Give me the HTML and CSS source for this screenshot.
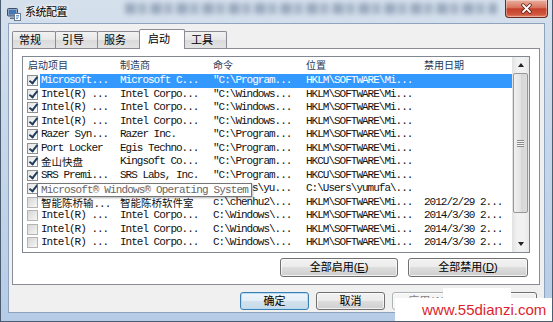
FILE: index.html
```html
<!DOCTYPE html>
<html lang="zh-CN">
<head>
  <meta charset="utf-8">
  <title>系统配置</title>
  <link rel="stylesheet" href="styles.css">
</head>
<body>
  <div class="window">
    <div class="titlebar">
      <svg class="appicon" width="14" height="14" viewBox="0 0 14 14">
        <rect x="0.5" y="1.5" width="10" height="7.5" rx="1" fill="#8ea6c4" stroke="#3d4f66"/>
        <rect x="2" y="3" width="7" height="4.5" fill="#3f78b8"/>
        <path d="M3 10.5h5v1.5h-5z" fill="#5d6f86"/>
        <rect x="7.5" y="6.5" width="6" height="7" fill="#fff" stroke="#6a7a8e"/>
        <path d="M9 8.5h3M9 10h3M9 11.5h2" stroke="#4a86c5" stroke-width="0.8"/>
      </svg>
      <span class="title">系统配置</span>
      <div class="glass"></div>
      <div class="close">
        <svg width="13" height="11" viewBox="0 0 13 11">
          <path d="M3 2l7 7M10 2l-7 7" stroke="#5b1d14" stroke-width="3.4" stroke-linecap="round"/>
          <path d="M3 2l7 7M10 2l-7 7" stroke="#fff" stroke-width="1.8" stroke-linecap="round"/>
        </svg>
      </div>
    </div>

    <div class="dialog">
      <div class="tabs">
        <div class="tab t1">常规</div>
        <div class="tab">引导</div>
        <div class="tab">服务</div>
        <div class="tab active">启动</div>
        <div class="tab">工具</div>
      </div>

      <div class="panel">
        <div class="listview">
          <div class="lv-body">
            <div class="lv-head">
              <div class="h1">启动项目</div>
              <div>制造商</div>
              <div>命令</div>
              <div>位置</div>
              <div>禁用日期</div>
            </div>

            <div class="row sel">
              <div class="cbcell"><span class="cb on"></span></div>
              <div class="cells"><span>Microsoft...</span><span>Microsoft C...</span><span>"C:\Program...</span><span>HKLM\SOFTWARE\Mi...</span><span></span></div>
            </div>
            <div class="row">
              <div class="cbcell"><span class="cb on"></span></div>
              <div class="cells"><span>Intel(R) ...</span><span>Intel Corpo...</span><span>"C:\Windows...</span><span>HKLM\SOFTWARE\Mi...</span><span></span></div>
            </div>
            <div class="row">
              <div class="cbcell"><span class="cb on"></span></div>
              <div class="cells"><span>Intel(R) ...</span><span>Intel Corpo...</span><span>"C:\Windows...</span><span>HKLM\SOFTWARE\Mi...</span><span></span></div>
            </div>
            <div class="row">
              <div class="cbcell"><span class="cb on"></span></div>
              <div class="cells"><span>Intel(R) ...</span><span>Intel Corpo...</span><span>"C:\Windows...</span><span>HKLM\SOFTWARE\Mi...</span><span></span></div>
            </div>
            <div class="row">
              <div class="cbcell"><span class="cb on"></span></div>
              <div class="cells"><span>Razer Syn...</span><span>Razer Inc.</span><span>"C:\Program...</span><span>HKLM\SOFTWARE\Mi...</span><span></span></div>
            </div>
            <div class="row">
              <div class="cbcell"><span class="cb on"></span></div>
              <div class="cells"><span>Port Locker</span><span>Egis Techno...</span><span>"C:\Program...</span><span>HKLM\SOFTWARE\Mi...</span><span></span></div>
            </div>
            <div class="row">
              <div class="cbcell"><span class="cb on"></span></div>
              <div class="cells"><span><i class="cjk">金山快盘</i></span><span>Kingsoft Co...</span><span>"C:\Program...</span><span>HKCU\SOFTWARE\Mi...</span><span></span></div>
            </div>
            <div class="row">
              <div class="cbcell"><span class="cb on"></span></div>
              <div class="cells"><span>SRS Premi...</span><span>SRS Labs, Inc.</span><span>"C:\Program...</span><span>HKCU\SOFTWARE\Mi...</span><span></span></div>
            </div>
            <div class="row">
              <div class="cbcell"><span class="cb on"></span></div>
              <div class="cells"><span></span><span></span><span class="under-tip">s\yu...</span><span>C:\Users\yumufa\...</span><span></span></div>
            </div>
            <div class="row">
              <div class="cbcell"><span class="cb"></span></div>
              <div class="cells"><span><i class="cjk">智能陈桥输</i>...</span><span><i class="cjk">智能陈桥软件室</i></span><span>c:\chenhu2\...</span><span>HKLM\SOFTWARE\Mi...</span><span>2012/2/29 2...</span></div>
            </div>
            <div class="row">
              <div class="cbcell"><span class="cb"></span></div>
              <div class="cells"><span>Intel(R) ...</span><span>Intel Corpo...</span><span>C:\Windows\...</span><span>HKLM\SOFTWARE\Mi...</span><span>2014/3/30 2...</span></div>
            </div>
            <div class="row">
              <div class="cbcell"><span class="cb"></span></div>
              <div class="cells"><span>Intel(R) ...</span><span>Intel Corpo...</span><span>C:\Windows\...</span><span>HKLM\SOFTWARE\Mi...</span><span>2014/3/30 2...</span></div>
            </div>
            <div class="row">
              <div class="cbcell"><span class="cb"></span></div>
              <div class="cells"><span>Intel(R) ...</span><span>Intel Corpo...</span><span>C:\Windows\...</span><span>HKLM\SOFTWARE\Mi...</span><span>2014/3/30 2...</span></div>
            </div>
          </div>

          <div class="vscroll">
            <div class="sb-btn"><span class="arrow up"></span></div>
            <div class="sb-track">
              <div class="sb-thumb"><span class="grip"></span></div>
            </div>
            <div class="sb-btn"><span class="arrow down"></span></div>
          </div>
        </div>

        <div class="panel-btns">
          <button class="btn all-on">全部启用(<u>E</u>)</button>
          <button class="btn all-off">全部禁用(<u>D</u>)</button>
        </div>
      </div>

      <div class="footer">
        <button class="btn default">确定</button>
        <button class="btn">取消</button>
        <button class="btn disabled">应用(<u>A</u>)</button>
        <button class="btn">帮助</button>
      </div>
    </div>

    <div class="tooltip">Microsoft® Windows® Operating System</div>
    <div class="watermark">www.55dianzi.com</div>
  </div>
</body>
</html>
```

FILE: styles.css
```css
html {
  font-family: "Liberation Sans", "Noto Sans CJK SC", sans-serif;
}
body {
  margin: 0;
  background: #fff;
}
.window {
  position: relative;
  width: 553px;
  height: 322px;
  box-sizing: border-box;
  display: flex;
  flex-direction: column;
  padding-bottom: 8px;
  overflow: hidden;
  background: linear-gradient(#d5e0ec, #c8d8ea 40%, #b6cce6);
  border: 1px solid #4c5d72;
  border-top: none;
}

/* title bar */
.titlebar {
  height: 23px;
  display: flex;
  align-items: flex-start;
  padding-left: 6px;
}
.appicon {
  margin-top: 7px;
}
.title {
  margin-left: 4px;
  margin-top: 5px;
  font-size: 11px;
  line-height: 15px;
  letter-spacing: -0.5px;
  color: #000;
  text-shadow: 0 0 5px #fff, 0 0 3px #fff;
}
.glass {
  margin-left: 58px;
  margin-top: 3px;
  width: 372px;
  height: 11px;
  background: repeating-linear-gradient(90deg, rgba(70,92,125,.5) 0 10px, rgba(90,110,140,.2) 10px 14px, rgba(70,92,125,.4) 14px 21px, rgba(120,140,165,.15) 21px 26px);
  filter: blur(2.5px);
  opacity: .8;
}
.close {
  margin-left: auto;
  margin-right: 4px;
  width: 43px;
  height: 18px;
  box-sizing: border-box;
  display: flex;
  align-items: center;
  justify-content: center;
  border: 1px solid #6a2a22;
  border-top: none;
  border-radius: 0 0 4px 4px;
  background: linear-gradient(#eab0a1, #d9735e 45%, #c5402a 52%, #d0573f 85%, #e08a6c);
  box-shadow: inset 0 0 0 1px rgba(255,255,255,.35);
}

/* dialog body */
.dialog {
  margin: 0 7px;
  height: 290px;
  box-sizing: border-box;
  background: #f0f0f0;
  border: 1px solid #8ea3bd;
  padding: 5px 4px 0 3px;
}
.tabs {
  display: flex;
  align-items: flex-start;
  height: 20px;
  position: relative;
  z-index: 2;
}
.tab {
  margin-top: 2px;
  margin-left: -1px;
  width: 43px;
  height: 17px;
  box-sizing: border-box;
  padding-left: 6px;
  border: 1px solid #898c95;
  border-bottom: none;
  border-radius: 2px 2px 0 0;
  background: linear-gradient(#f2f2f2, #e6e6e6 50%, #dadada 50%, #e3e3e3);
  font-size: 11px;
  line-height: 16px;
  color: #000;
}
.tab.t1 {
  margin-left: 0;
  width: 44px;
}
.tab.active {
  margin-top: 0;
  width: 46px;
  height: 20px;
  padding-left: 8px;
  background: #fff;
  line-height: 18px;
}

.panel {
  position: relative;
  z-index: 1;
  margin-top: -1px;
  width: 528px;
  height: 237px;
  box-sizing: border-box;
  background: #fff;
  border: 1px solid #898c95;
  padding: 7px 11px 0 9px;
}

/* list view */
.listview {
  display: flex;
  width: 508px;
  height: 197px;
  box-sizing: border-box;
  border: 1px solid #828790;
  background: #fff;
}
.lv-body {
  flex: 1;
  overflow: hidden;
}
.lv-head {
  display: grid;
  grid-template-columns: 95px 93px 93px 118px 1fr;
  height: 17px;
  font-size: 10px;
  line-height: 17px;
  color: #1e395b;
}
.lv-head div {
  padding-left: 2px;
}
.lv-head .h1 {
  padding-left: 5px;
}
.row {
  display: flex;
  height: 13.5px;
}
.cbcell {
  width: 17px;
  box-sizing: border-box;
  padding-left: 4px;
  display: flex;
  align-items: center;
}
.cb {
  position: relative;
  width: 11px;
  height: 11px;
  box-sizing: border-box;
  border: 1px solid #b4b4b4;
  background: linear-gradient(135deg, #d6d6d6, #f6f6f6);
}
.cb.on {
  border-color: #8f8f8f;
  background: linear-gradient(135deg, #e4e4e4, #fdfdfd);
}
.cb.on::after {
  content: "";
  position: absolute;
  left: 3px;
  top: -1px;
  width: 3px;
  height: 7px;
  border: solid #1f3d5c;
  border-width: 0 2px 2px 0;
  transform: rotate(38deg);
}
.cells {
  flex: 1;
  display: grid;
  grid-template-columns: 78px 93px 93px 118px 1fr;
  font-family: "Liberation Mono", "Noto Sans CJK SC", monospace;
  font-size: 11px;
  letter-spacing: -1px;
  line-height: 13.5px;
  color: #111;
  white-space: nowrap;
}
.cells span {
  overflow: hidden;
  padding-left: 2px;
}
.cells span:first-child {
  padding-left: 1px;
}
.cells span.under-tip {
  padding-left: 41px;
}
.cjk {
  font-style: normal;
  font-family: "Noto Sans CJK SC", sans-serif;
  font-size: 10.5px;
  letter-spacing: 0;
}
.row.sel .cells {
  background: #3399ff;
  color: #fff;
}

/* scrollbar */
.vscroll {
  width: 17px;
  display: flex;
  flex-direction: column;
  background: linear-gradient(90deg, #e2e2e2, #f1f1f1 30%, #f1f1f1 70%, #e8e8e8);
}
.sb-btn {
  height: 16px;
  display: flex;
  align-items: center;
  justify-content: center;
}
.arrow {
  width: 0;
  height: 0;
  border-left: 3.5px solid transparent;
  border-right: 3.5px solid transparent;
}
.arrow.up {
  border-bottom: 4px solid #222;
}
.arrow.down {
  border-top: 4px solid #222;
}
.sb-track {
  flex: 1;
}
.sb-thumb {
  margin: 0 1px;
  height: 140px;
  box-sizing: border-box;
  border: 1px solid #979797;
  border-radius: 2px;
  background: linear-gradient(90deg, #f0f0f0, #e3e3e3 50%, #d6d6d6 51%, #dcdcdc);
  display: flex;
  align-items: center;
  justify-content: center;
}
.grip {
  width: 7px;
  height: 7px;
  background: repeating-linear-gradient(#8a8a8a 0 1px, #f4f4f4 1px 2px);
}

/* buttons */
.btn {
  height: 18px;
  padding: 0;
  box-sizing: border-box;
  border: 1px solid #707070;
  border-radius: 3px;
  background: linear-gradient(#f2f2f2, #ebebeb 50%, #dddddd 50%, #cfcfcf);
  box-shadow: inset 0 0 0 1px rgba(255,255,255,.7);
  font-family: "Liberation Sans", "Noto Sans CJK SC", sans-serif;
  font-size: 11px;
  line-height: 15px;
  color: #000;
}
.panel-btns {
  margin-top: 5px;
  display: flex;
  justify-content: flex-end;
  gap: 10px;
}
.all-on {
  width: 118px;
  height: 19px;
}
.all-off {
  width: 120px;
  height: 19px;
}
.footer {
  margin-top: 7px;
  margin-right: 3px;
  display: flex;
  justify-content: flex-end;
  gap: 7px;
}
.footer .btn {
  width: 69px;
}
.btn.default {
  border-color: #3c7fb1;
  background: linear-gradient(#eef6fb, #e3eef6 50%, #d2e2ee 50%, #c8dae8);
  box-shadow: inset 0 0 0 1px #b6dcf3;
}
.btn.disabled {
  border-color: #adb2b5;
  background: #f4f4f4;
  color: #838383;
}

/* overlays */
.tooltip {
  position: absolute;
  z-index: 5;
  left: 36px;
  top: 183px;
  width: 215px;
  height: 14px;
  box-sizing: border-box;
  padding-left: 3px;
  border: 1px solid #767676;
  background: #fff;
  box-shadow: 1px 1px 2px rgba(0,0,0,.3);
  font-family: "Liberation Mono", monospace;
  font-size: 11px;
  letter-spacing: -0.85px;
  line-height: 12px;
  color: #666;
  white-space: nowrap;
}
.watermark {
  position: absolute;
  z-index: 5;
  left: 394px;
  top: 298px;
  width: 160px;
  height: 24px;
  box-sizing: border-box;
  padding-left: 27px;
  background: #fff;
  font-family: "Liberation Sans", Arial, sans-serif;
  font-size: 15px;
  line-height: 24px;
  color: #de1f2c;
}
.watermark::before {
  content: "";
  position: absolute;
  left: 48px;
  top: -10px;
  width: 68px;
  height: 10px;
  background: #fff;
}
```
